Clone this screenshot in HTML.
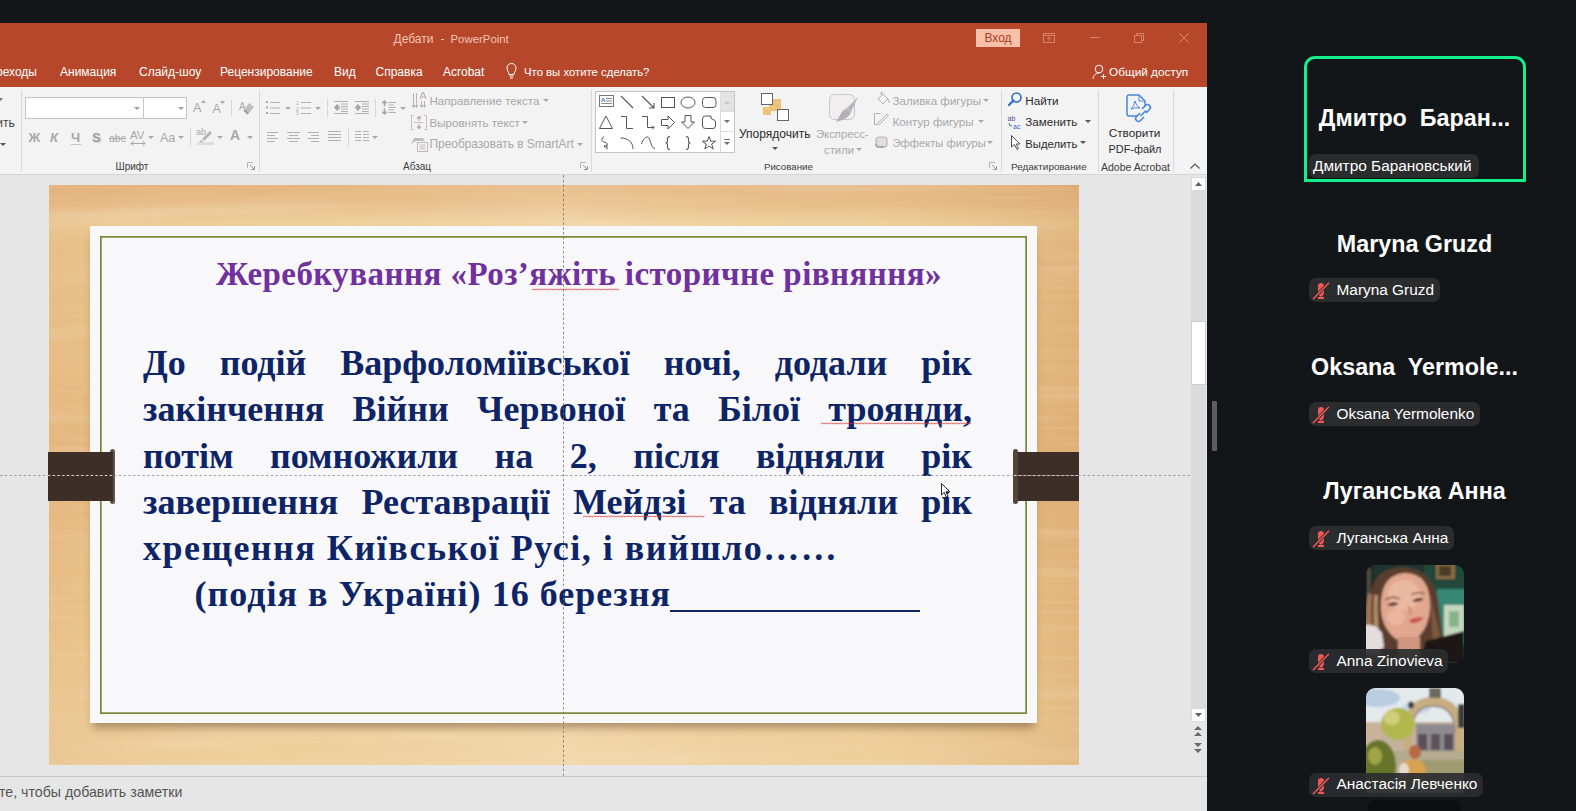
<!DOCTYPE html>
<html><head><meta charset="utf-8">
<style>
*{margin:0;padding:0;box-sizing:border-box}
html,body{width:1576px;height:811px;overflow:hidden;background:#131619;font-family:"Liberation Sans",sans-serif;position:relative}
svg{overflow:visible}
.line{position:absolute;left:94px;width:829px;display:flex;justify-content:space-between;font-family:"Liberation Serif",serif;font-weight:bold;font-size:36px;line-height:41px;color:#0d2466;white-space:nowrap}
.sl{position:absolute;font-family:"Liberation Serif",serif;font-weight:bold;white-space:nowrap;color:#0d2466}
</style></head><body>
<div style="position:absolute;left:0px;top:23px;width:1207px;height:788px;background:#e6e6e6;"></div>
<div style="position:absolute;left:0px;top:23px;width:1207px;height:64px;background:#b7472a;"></div>
<div style="position:absolute;top:30.9px;font-size:12.00px;line-height:17px;color:#f3c6b3;white-space:nowrap;left:393.5px;">Дебати</div>
<div style="position:absolute;left:440.5px;top:39px;width:3.5px;height:1px;background:#f3c6b3;"></div>
<div style="position:absolute;top:31.4px;font-size:11.40px;line-height:16px;color:#f3c6b3;white-space:nowrap;left:450.5px;">PowerPoint</div>
<div style="position:absolute;left:976px;top:29px;width:44px;height:18px;background:#f8bfa9;color:#a63f26;font-size:12px;line-height:18px;text-align:center">Вход</div>
<svg style="position:absolute;left:1043px;top:33px;" width="12" height="10" viewBox="0 0 12 10"><rect x="0.5" y="0.5" width="11" height="9" fill="none" stroke="#d9836b"/><path d="M0.5 2.5H11.5M6 8V4M4 6L6 4L8 6" fill="none" stroke="#d9836b"/></svg>
<div style="position:absolute;left:1090px;top:37px;width:10px;height:1px;background:#d9836b;"></div>
<svg style="position:absolute;left:1134px;top:33px;" width="10" height="10" viewBox="0 0 10 10"><path d="M2.5 2.5V0.5H9.5V7.5H7.5M0.5 2.5H7.5V9.5H0.5Z" fill="none" stroke="#d9836b"/></svg>
<svg style="position:absolute;left:1179px;top:33px;" width="10" height="10" viewBox="0 0 10 10"><path d="M0 0L10 10M10 0L0 10" stroke="#d9836b" stroke-width="1"/></svg>
<div style="position:absolute;top:63.9px;font-size:12.00px;line-height:17px;color:#ffffff;white-space:nowrap;left:-4.0px;">реходы</div>
<div style="position:absolute;top:63.9px;font-size:12.00px;line-height:17px;color:#ffffff;white-space:nowrap;left:60.0px;">Анимация</div>
<div style="position:absolute;top:63.9px;font-size:12.00px;line-height:17px;color:#ffffff;white-space:nowrap;left:139.0px;">Слайд-шоу</div>
<div style="position:absolute;top:63.9px;font-size:12.00px;line-height:17px;color:#ffffff;white-space:nowrap;left:220.0px;">Рецензирование</div>
<div style="position:absolute;top:63.9px;font-size:12.00px;line-height:17px;color:#ffffff;white-space:nowrap;left:334.0px;">Вид</div>
<div style="position:absolute;top:63.9px;font-size:12.00px;line-height:17px;color:#ffffff;white-space:nowrap;left:375.5px;">Справка</div>
<div style="position:absolute;top:63.9px;font-size:12.00px;line-height:17px;color:#ffffff;white-space:nowrap;left:443.0px;">Acrobat</div>
<div style="position:absolute;top:64.4px;font-size:11.35px;line-height:16px;color:#ffffff;white-space:nowrap;left:524.0px;">Что вы хотите сделать?</div>
<svg style="position:absolute;left:506px;top:63px;" width="11" height="16" viewBox="0 0 11 16"><path d="M3 11.5C3 9 1 8 1 5A4.5 4.5 0 0 1 10 5C10 8 8 9 8 11.5Z" fill="none" stroke="#fff" stroke-width="1"/><path d="M3.5 13H7.5M4 15H7" stroke="#fff"/></svg>
<div style="position:absolute;top:63.9px;font-size:11.80px;line-height:17px;color:#ffffff;white-space:nowrap;left:1109.0px;">Общий доступ</div>
<svg style="position:absolute;left:1092px;top:64px;" width="14" height="16" viewBox="0 0 14 16"><circle cx="7" cy="5" r="3.8" fill="none" stroke="#fff"/><path d="M1 15C1.5 11 4 9 7 9" fill="none" stroke="#fff"/><path d="M9 12.5H14M11.5 10V15" stroke="#fff"/></svg>
<div style="position:absolute;left:0px;top:87px;width:1207px;height:88px;background:#f3f3f3;border-bottom:1px solid #d5d5d5"></div>
<div style="position:absolute;left:21px;top:90px;width:1px;height:82px;background:#dadada;"></div>
<div style="position:absolute;left:259px;top:90px;width:1px;height:82px;background:#dadada;"></div>
<div style="position:absolute;left:591px;top:90px;width:1px;height:82px;background:#dadada;"></div>
<div style="position:absolute;left:1001px;top:90px;width:1px;height:82px;background:#dadada;"></div>
<div style="position:absolute;left:1098px;top:90px;width:1px;height:82px;background:#dadada;"></div>
<div style="position:absolute;left:1173px;top:90px;width:1px;height:82px;background:#dadada;"></div>
<div style="position:absolute;top:114.7px;font-size:12.00px;line-height:17px;color:#444;white-space:nowrap;left:-3.7px;">ить</div>
<svg style="position:absolute;left:0.0px;top:142.5px;" width="6" height="3" viewBox="0 0 6 3"><path d="M0 0H6 L3.0 3Z" fill="#555"/></svg>
<svg style="position:absolute;left:-2.5px;top:98.0px;" width="5" height="3" viewBox="0 0 5 3"><path d="M0 0H5 L2.5 3Z" fill="#777"/></svg>
<div style="position:absolute;left:25px;top:97px;width:162px;height:22px;background:#fff;border:1px solid #c6c6c6"></div>
<div style="position:absolute;left:143px;top:98px;width:1px;height:20px;background:#c6c6c6;"></div>
<svg style="position:absolute;left:134.0px;top:107.0px;" width="6" height="3" viewBox="0 0 6 3"><path d="M0 0H6 L3.0 3Z" fill="#9d9d9d"/></svg>
<svg style="position:absolute;left:178.0px;top:107.0px;" width="6" height="3" viewBox="0 0 6 3"><path d="M0 0H6 L3.0 3Z" fill="#9d9d9d"/></svg>
<div style="position:absolute;top:99.2px;font-size:12.50px;line-height:18px;color:#a8a8a8;white-space:nowrap;left:193.0px;">A</div>
<svg style="position:absolute;left:200.5px;top:100px;" width="4" height="3" viewBox="0 0 4 3"><path d="M0 3L2.5 0L5 3Z" fill="#a8a8a8"/></svg>
<div style="position:absolute;top:100.2px;font-size:12.50px;line-height:18px;color:#a8a8a8;white-space:nowrap;left:212.5px;">A</div>
<svg style="position:absolute;left:219.5px;top:100.5px;" width="4.5" height="2.5" viewBox="0 0 4.5 2.5"><path d="M0 0H5L2.5 3Z" fill="#a8a8a8"/></svg>
<div style="position:absolute;left:231px;top:100px;width:1px;height:16px;background:#d6d6d6;"></div>
<div style="position:absolute;top:99.7px;font-size:10.00px;line-height:14px;color:#a8a8a8;white-space:nowrap;left:239.0px;">A</div>
<svg style="position:absolute;left:243px;top:103px;" width="11" height="11" viewBox="0 0 11 11"><path d="M6 0L11 4L5 11L1 7Z" fill="#bdbdbd"/><path d="M1 7L5 11" stroke="#a0a0a0" stroke-width="2"/></svg>
<div style="position:absolute;top:128.7px;font-size:13.00px;line-height:18px;color:#a8a8a8;white-space:nowrap;font-weight:bold;left:28.5px;">Ж</div>
<div style="position:absolute;top:128.7px;font-size:13.00px;line-height:18px;color:#a8a8a8;white-space:nowrap;font-weight:bold;left:50.0px;font-style:italic">К</div>
<div style="position:absolute;top:128.7px;font-size:13.00px;line-height:18px;color:#a8a8a8;white-space:nowrap;font-weight:bold;left:71.0px;">Ч</div>
<div style="position:absolute;left:71px;top:143.5px;width:10px;height:1px;background:#c4c4c4;"></div>
<div style="position:absolute;top:128.7px;font-size:13.00px;line-height:18px;color:#a0a0a0;white-space:nowrap;font-weight:bold;left:92.0px;text-shadow:1px 1px 1px #cfcfcf">S</div>
<div style="position:absolute;top:131.2px;font-size:10.50px;line-height:15px;color:#a8a8a8;white-space:nowrap;left:109.0px;text-decoration:line-through">abc</div>
<div style="position:absolute;top:126.7px;font-size:11.50px;line-height:16px;color:#a8a8a8;white-space:nowrap;left:130.0px;">AV</div>
<svg style="position:absolute;left:131px;top:140.5px;" width="14" height="5" viewBox="0 0 14 5"><path d="M0 2.5H14M2.5 0L0 2.5L2.5 5M11.5 0L14 2.5L11.5 5" fill="none" stroke="#a8a8a8" stroke-width="1"/></svg>
<svg style="position:absolute;left:148.0px;top:136.0px;" width="6" height="3" viewBox="0 0 6 3"><path d="M0 0H6 L3.0 3Z" fill="#a8a8a8"/></svg>
<div style="position:absolute;top:128.7px;font-size:12.50px;line-height:18px;color:#a8a8a8;white-space:nowrap;left:160.0px;">Aa</div>
<svg style="position:absolute;left:178.0px;top:136.0px;" width="6" height="3" viewBox="0 0 6 3"><path d="M0 0H6 L3.0 3Z" fill="#a8a8a8"/></svg>
<div style="position:absolute;left:190px;top:129px;width:1px;height:18px;background:#d6d6d6;"></div>
<div style="position:absolute;top:126.2px;font-size:9.00px;line-height:13px;color:#a8a8a8;white-space:nowrap;left:196.0px;">ab</div>
<svg style="position:absolute;left:198px;top:129px;" width="17" height="14" viewBox="0 0 17 14"><path d="M4 10L12 2L14 4L6 12Z" fill="#b3b3b3"/><path d="M3 11L5 13L1.5 13.5Z" fill="#a5a5a5"/></svg>
<div style="position:absolute;left:197px;top:141.5px;width:17px;height:3px;background:#e3dcdf;"></div>
<svg style="position:absolute;left:217.0px;top:136.0px;" width="6" height="3" viewBox="0 0 6 3"><path d="M0 0H6 L3.0 3Z" fill="#a8a8a8"/></svg>
<div style="position:absolute;top:124.7px;font-size:14.00px;line-height:20px;color:#a8a8a8;white-space:nowrap;font-weight:bold;left:230.0px;">A</div>
<svg style="position:absolute;left:247.0px;top:136.0px;" width="6" height="3" viewBox="0 0 6 3"><path d="M0 0H6 L3.0 3Z" fill="#a8a8a8"/></svg>
<div style="position:absolute;top:160.4px;font-size:10.00px;line-height:14px;color:#3c3c3c;white-space:nowrap;left:115.5px;">Шрифт</div>
<svg style="position:absolute;left:247px;top:162px;" width="8" height="8" viewBox="0 0 8 8"><path d="M0.5 6V0.5H6" fill="none" stroke="#b5b5b5"/><path d="M3 3L7.5 7.5M7.5 4V7.5H4" fill="none" stroke="#9a9a9a"/></svg>
<svg style="position:absolute;left:266px;top:101px;" width="15" height="14" viewBox="0 0 15 14"><rect x="0" y="0" width="2" height="2" fill="#a8a8a8"/><rect x="0" y="5.5" width="2" height="2" fill="#a8a8a8"/><rect x="0" y="11" width="2" height="2" fill="#a8a8a8"/><path d="M4 1.5H14M4 7H14M4 12.5H14" stroke="#b0b0b0"/></svg>
<svg style="position:absolute;left:285.0px;top:106.5px;" width="6" height="3" viewBox="0 0 6 3"><path d="M0 0H6 L3.0 3Z" fill="#a8a8a8"/></svg>
<svg style="position:absolute;left:296px;top:101px;" width="16" height="14" viewBox="0 0 16 14"><text x="0" y="4" font-size="5" fill="#a8a8a8" font-family="Liberation Sans">1</text><text x="0" y="9.5" font-size="5" fill="#a8a8a8" font-family="Liberation Sans">2</text><text x="0" y="14" font-size="5" fill="#a8a8a8" font-family="Liberation Sans">3</text><path d="M5 1.5H15M5 7H15M5 12.5H15" stroke="#b0b0b0"/></svg>
<svg style="position:absolute;left:315.0px;top:106.5px;" width="6" height="3" viewBox="0 0 6 3"><path d="M0 0H6 L3.0 3Z" fill="#a8a8a8"/></svg>
<div style="position:absolute;left:327px;top:99px;width:1px;height:18px;background:#d6d6d6;"></div>
<svg style="position:absolute;left:334px;top:101px;" width="15" height="13" viewBox="0 0 15 13"><path d="M0 0.5H14M7 3H14M7 5.5H14M7 8H14M7 10.5H14M0 12.5H14" stroke="#b0b0b0"/><path d="M6 6.5H2M4 3.8L1.3 6.5L4 9.2" fill="none" stroke="#a2a2a2" stroke-width="2"/></svg>
<svg style="position:absolute;left:355px;top:101px;" width="15" height="13" viewBox="0 0 15 13"><path d="M0 0.5H14M7 3H14M7 5.5H14M7 8H14M7 10.5H14M0 12.5H14" stroke="#b0b0b0"/><path d="M0 6.5H4M2 3.8L4.7 6.5L2 9.2" fill="none" stroke="#a2a2a2" stroke-width="2"/></svg>
<div style="position:absolute;left:375px;top:99px;width:1px;height:18px;background:#d6d6d6;"></div>
<svg style="position:absolute;left:382px;top:100px;" width="15" height="15" viewBox="0 0 15 15"><path d="M2.5 1V6.5M0.3 3.3L2.5 1L4.7 3.3M2.5 8.5V14M0.3 11.7L2.5 14L4.7 11.7" fill="none" stroke="#a5a5a5" stroke-width="1.5"/><path d="M6.5 2.5H14M6.5 5H12M6.5 7.5H14M6.5 10H12M6.5 12.5H14" stroke="#b0b0b0"/></svg>
<svg style="position:absolute;left:400.0px;top:106.5px;" width="6" height="3" viewBox="0 0 6 3"><path d="M0 0H6 L3.0 3Z" fill="#a8a8a8"/></svg>
<svg style="position:absolute;left:267px;top:132px;" width="12" height="10" viewBox="0 0 12 10"><path d="M0 0.5H11M0 3.5H8M0 6.5H11M0 9.5H8" stroke="#b0b0b0"/></svg>
<svg style="position:absolute;left:287px;top:132px;" width="13" height="10" viewBox="0 0 13 10"><path d="M0 0.5H13M2 3.5H11M0 6.5H13M2 9.5H11" stroke="#b0b0b0"/></svg>
<svg style="position:absolute;left:308px;top:132px;" width="12" height="10" viewBox="0 0 12 10"><path d="M0 0.5H11M3 3.5H11M0 6.5H11M3 9.5H11" stroke="#b0b0b0"/></svg>
<svg style="position:absolute;left:328px;top:131px;" width="13" height="12" viewBox="0 0 13 12"><path d="M0 0.5H13M0 3.5H13M0 6.5H13M0 9.5H13" stroke="#b0b0b0"/></svg>
<div style="position:absolute;left:348px;top:129px;width:1px;height:18px;background:#d6d6d6;"></div>
<svg style="position:absolute;left:355px;top:131px;" width="14" height="12" viewBox="0 0 14 12"><path d="M0 0.5H6M8 0.5H14M0 3.5H6M8 3.5H14M0 6.5H6M8 6.5H14M0 9.5H6M8 9.5H14" stroke="#b0b0b0"/></svg>
<svg style="position:absolute;left:372.0px;top:136.0px;" width="6" height="3" viewBox="0 0 6 3"><path d="M0 0H6 L3.0 3Z" fill="#a8a8a8"/></svg>
<svg style="position:absolute;left:412px;top:92px;" width="15" height="17" viewBox="0 0 15 17"><path d="M1.5 1V15M4.5 1V15M0 13L1.5 15.5L3 13M3 13L4.5 15.5L6 13M9.5 9V15M12.5 9V15M8 13L9.5 15.5L11 13M11 13L12.5 15.5L14 13" fill="none" stroke="#b8b3b6"/><path d="M8 7L10.5 0.5H11.5L14 7M9 5H13" fill="none" stroke="#b3aeb1" stroke-width="1.1"/></svg>
<div style="position:absolute;top:93.2px;font-size:11.60px;line-height:16px;color:#a8a8a8;white-space:nowrap;left:429.5px;">Направление текста</div>
<svg style="position:absolute;left:543.0px;top:98.5px;" width="6" height="3" viewBox="0 0 6 3"><path d="M0 0H6 L3.0 3Z" fill="#a8a8a8"/></svg>
<svg style="position:absolute;left:411px;top:115px;" width="16" height="15" viewBox="0 0 16 15"><path d="M3 0.5H0.5V14.5H3M13 0.5H15.5V14.5H13" fill="none" stroke="#c4bfc2"/><path d="M3 7.5H13" stroke="#c8c3c6"/><path d="M8 1.5V6M6 3.5L8 1.5L10 3.5M8 9V13.5M6 11.5L8 13.5L10 11.5" fill="none" stroke="#aaa5a8" stroke-width="1.1"/></svg>
<div style="position:absolute;top:114.7px;font-size:11.60px;line-height:16px;color:#a8a8a8;white-space:nowrap;left:429.5px;">Выровнять текст</div>
<svg style="position:absolute;left:522.0px;top:120.5px;" width="6" height="3" viewBox="0 0 6 3"><path d="M0 0H6 L3.0 3Z" fill="#a8a8a8"/></svg>
<svg style="position:absolute;left:411px;top:137px;" width="17" height="15" viewBox="0 0 17 15"><path d="M0 7L3 1H12L14 4H5Z" fill="#c2bdc0"/><rect x="6.5" y="5.5" width="10" height="9" fill="#f7f5f6" stroke="#bdb8bb"/><path d="M8.5 8H14.5M8.5 10H14.5M8.5 12H14.5" stroke="#c4bfc2"/></svg>
<div style="position:absolute;top:136.2px;font-size:11.90px;line-height:17px;color:#a8a8a8;white-space:nowrap;left:429.5px;">Преобразовать в SmartArt</div>
<svg style="position:absolute;left:577.0px;top:142.5px;" width="6" height="3" viewBox="0 0 6 3"><path d="M0 0H6 L3.0 3Z" fill="#a8a8a8"/></svg>
<div style="position:absolute;top:160.4px;font-size:10.00px;line-height:14px;color:#3c3c3c;white-space:nowrap;left:403.0px;">Абзац</div>
<svg style="position:absolute;left:580px;top:162px;" width="8" height="8" viewBox="0 0 8 8"><path d="M0.5 6V0.5H6" fill="none" stroke="#b5b5b5"/><path d="M3 3L7.5 7.5M7.5 4V7.5H4" fill="none" stroke="#9a9a9a"/></svg>
<div style="position:absolute;left:595px;top:91px;width:140px;height:62px;background:#fff;border:1px solid #c6c6c6"></div>
<div style="position:absolute;left:720px;top:92px;width:14px;height:20px;background:#e3e3e3;"></div>
<div style="position:absolute;left:720px;top:92px;width:1px;height:60px;background:#dcdcdc;"></div>
<div style="position:absolute;left:720px;top:131px;width:14px;height:1px;background:#dcdcdc;"></div>
<div style="position:absolute;left:720px;top:111px;width:14px;height:1px;background:#dcdcdc;"></div>
<svg style="position:absolute;left:724px;top:101px;" width="6" height="3" viewBox="0 0 6 3"><path d="M0 3L3 0L6 3Z" fill="#c8c8c8"/></svg>
<svg style="position:absolute;left:724px;top:120px;" width="6" height="3" viewBox="0 0 6 3"><path d="M0 0H6L3 3Z" fill="#707070"/></svg>
<svg style="position:absolute;left:724px;top:139px;" width="6" height="6" viewBox="0 0 6 6"><path d="M0 0.5H6" stroke="#707070"/><path d="M0 3H6L3 6Z" fill="#707070"/></svg>
<svg style="position:absolute;left:599px;top:94.5px;" width="14" height="14" viewBox="0 0 14 14"><rect x="0.5" y="0.5" width="14" height="11" fill="#fff" stroke="#777"/><text x="2" y="7" font-size="6" font-weight="bold" fill="#3a6fc4" font-family="Liberation Sans">A</text><path d="M7 3.5H13M7 6H13M2 8.5H13" stroke="#888"/></svg>
<svg style="position:absolute;left:620px;top:94.5px;" width="14" height="14" viewBox="0 0 14 14"><path d="M1 1L13 13" stroke="#555" stroke-width="1.1"/></svg>
<svg style="position:absolute;left:641px;top:94.5px;" width="14" height="14" viewBox="0 0 14 14"><path d="M1 1L13 13M13 8V13H8" fill="none" stroke="#555" stroke-width="1.1"/></svg>
<svg style="position:absolute;left:661px;top:94.5px;" width="14" height="14" viewBox="0 0 14 14"><rect x="0.5" y="2.5" width="13" height="10" fill="none" stroke="#555"/></svg>
<svg style="position:absolute;left:681px;top:94.5px;" width="14" height="14" viewBox="0 0 14 14"><ellipse cx="7" cy="7.5" rx="7" ry="5.5" fill="none" stroke="#555"/></svg>
<svg style="position:absolute;left:702px;top:94.5px;" width="14" height="14" viewBox="0 0 14 14"><rect x="0.5" y="2.5" width="13.5" height="10" rx="3" fill="none" stroke="#555"/></svg>
<svg style="position:absolute;left:599px;top:115px;" width="14" height="14" viewBox="0 0 14 14"><path d="M7 1L13.5 13.5H0.5Z" fill="none" stroke="#555"/></svg>
<svg style="position:absolute;left:620px;top:115px;" width="14" height="14" viewBox="0 0 14 14"><path d="M1 1.5H6.5V13.5H13" fill="none" stroke="#555"/></svg>
<svg style="position:absolute;left:641px;top:115px;" width="14" height="14" viewBox="0 0 14 14"><path d="M1 1.5H6.5V12.5H13M11 10.5L13 12.5L11 14.5" fill="none" stroke="#555"/></svg>
<svg style="position:absolute;left:661px;top:115px;" width="14" height="14" viewBox="0 0 14 14"><path d="M0.5 4.5H7V1L13.5 7.5L7 14V10.5H0.5Z" fill="none" stroke="#555"/></svg>
<svg style="position:absolute;left:681px;top:115px;" width="14" height="14" viewBox="0 0 14 14"><path d="M4 0.5H10V7H13.5L7 13.5L0.5 7H4Z" fill="none" stroke="#555"/></svg>
<svg style="position:absolute;left:702px;top:115px;" width="14" height="14" viewBox="0 0 14 14"><path d="M0.5 4Q0.5 1 3.5 1H9Q8 4 11 4.5Q13.5 5 13.5 7V11Q13.5 13.5 11 13.5H3.5Q0.5 13.5 0.5 11Z" fill="none" stroke="#555"/></svg>
<svg style="position:absolute;left:599px;top:135.5px;" width="14" height="14" viewBox="0 0 14 14"><path d="M5 0.5Q2 2 3 4.5Q4 6.5 7 6.5Q9 7.5 8 10Q7 12 5.5 11Q4.5 9.5 6.5 9Q8.5 9.5 8 13.5" fill="none" stroke="#555"/></svg>
<svg style="position:absolute;left:620px;top:135.5px;" width="14" height="14" viewBox="0 0 14 14"><path d="M0.5 2C8 2 13 6 13 13" fill="none" stroke="#555"/></svg>
<svg style="position:absolute;left:641px;top:135.5px;" width="14" height="14" viewBox="0 0 14 14"><path d="M0.5 8C2 3 4.5 1 6.5 1C9.5 1 9.5 12.5 14 12.5" fill="none" stroke="#555"/></svg>
<svg style="position:absolute;left:661px;top:135.5px;" width="14" height="14" viewBox="0 0 14 14"><path d="M9 0.5Q6.5 0.5 6.5 3V5Q6.5 7 4.5 7Q6.5 7 6.5 9V11Q6.5 13.5 9 13.5" fill="none" stroke="#555" stroke-width="1.1"/></svg>
<svg style="position:absolute;left:681px;top:135.5px;" width="14" height="14" viewBox="0 0 14 14"><path d="M5 0.5Q7.5 0.5 7.5 3V5Q7.5 7 9.5 7Q7.5 7 7.5 9V11Q7.5 13.5 5 13.5" fill="none" stroke="#555" stroke-width="1.1"/></svg>
<svg style="position:absolute;left:702px;top:135.5px;" width="14" height="14" viewBox="0 0 14 14"><path d="M7 0.5L8.8 5.2H13.6L9.7 8.1L11.2 13L7 10L2.8 13L4.3 8.1L0.4 5.2H5.2Z" fill="none" stroke="#555"/></svg>
<svg style="position:absolute;left:761px;top:93px;" width="28" height="29" viewBox="0 0 28 29"><rect x="8" y="6" width="12" height="12" fill="#ecc479"/><rect x="0.5" y="0.5" width="11" height="11" fill="#fff" stroke="#666"/><rect x="2" y="14" width="8" height="8" fill="#ecc479"/><rect x="16.5" y="16.5" width="11" height="11" fill="#fff" stroke="#666"/></svg>
<div style="position:absolute;top:125.7px;font-size:12.00px;line-height:17px;color:#2b2b2b;white-space:nowrap;left:739.0px;">Упорядочить</div>
<svg style="position:absolute;left:772.0px;top:147.0px;" width="6" height="3" viewBox="0 0 6 3"><path d="M0 0H6 L3.0 3Z" fill="#555"/></svg>
<svg style="position:absolute;left:829px;top:94px;" width="30" height="29" viewBox="0 0 30 29"><rect x="0.5" y="0.5" width="25" height="25" rx="5" fill="#f1eef0" stroke="#c8c6c8"/><path d="M29 3L22 18L17 15Z" fill="#b9b6b9"/><path d="M17 15C13 16 12 20 7 28C14 26 20 24 22 18Z" fill="#b2b0b2"/></svg>
<div style="position:absolute;top:125.7px;font-size:11.30px;line-height:16px;color:#a8a8a8;white-space:nowrap;left:816.0px;">Экспресс-</div>
<div style="position:absolute;top:142.2px;font-size:11.30px;line-height:16px;color:#a8a8a8;white-space:nowrap;left:824.0px;">стили</div>
<svg style="position:absolute;left:856.0px;top:148.0px;" width="6" height="3" viewBox="0 0 6 3"><path d="M0 0H6 L3.0 3Z" fill="#a8a8a8"/></svg>
<svg style="position:absolute;left:877px;top:92px;" width="13" height="13" viewBox="0 0 13 13"><path d="M1 7L6 2L11 7L6 12Z" fill="none" stroke="#b0b0b0"/><path d="M4 3V0.5H6" fill="none" stroke="#b0b0b0"/><path d="M11 7Q13 9 12 11" fill="none" stroke="#b0b0b0"/></svg>
<div style="position:absolute;top:93.2px;font-size:11.60px;line-height:16px;color:#a8a8a8;white-space:nowrap;left:892.5px;">Заливка фигуры</div>
<svg style="position:absolute;left:983.0px;top:98.5px;" width="6" height="3" viewBox="0 0 6 3"><path d="M0 0H6 L3.0 3Z" fill="#a8a8a8"/></svg>
<svg style="position:absolute;left:874px;top:113px;" width="15" height="12" viewBox="0 0 15 12"><path d="M0.5 1V11.5H4" fill="none" stroke="#b0b0b0"/><path d="M0.5 0.5H6" stroke="#b0b0b0"/><path d="M4 10L13 1L14.5 2.5L5.5 11.5Z" fill="none" stroke="#b0b0b0"/></svg>
<div style="position:absolute;top:114.3px;font-size:11.60px;line-height:16px;color:#a8a8a8;white-space:nowrap;left:892.5px;">Контур фигуры</div>
<svg style="position:absolute;left:978.0px;top:120.0px;" width="6" height="3" viewBox="0 0 6 3"><path d="M0 0H6 L3.0 3Z" fill="#a8a8a8"/></svg>
<svg style="position:absolute;left:875px;top:136px;" width="13" height="12" viewBox="0 0 13 12"><rect x="1" y="1" width="11" height="10" rx="3" fill="#e0dde0" stroke="#b8b6b8" stroke-width="1.2"/><path d="M1 8Q1 11 4 11H9" fill="none" stroke="#aaa" stroke-width="2"/></svg>
<div style="position:absolute;top:135.3px;font-size:11.20px;line-height:16px;color:#a8a8a8;white-space:nowrap;left:892.5px;">Эффекты фигуры</div>
<svg style="position:absolute;left:987.0px;top:141.0px;" width="6" height="3" viewBox="0 0 6 3"><path d="M0 0H6 L3.0 3Z" fill="#a8a8a8"/></svg>
<div style="position:absolute;top:160.4px;font-size:9.70px;line-height:14px;color:#3c3c3c;white-space:nowrap;left:764.0px;">Рисование</div>
<svg style="position:absolute;left:989px;top:162px;" width="8" height="8" viewBox="0 0 8 8"><path d="M0.5 6V0.5H6" fill="none" stroke="#b5b5b5"/><path d="M3 3L7.5 7.5M7.5 4V7.5H4" fill="none" stroke="#9a9a9a"/></svg>
<svg style="position:absolute;left:1008px;top:92px;" width="14" height="15" viewBox="0 0 14 15"><circle cx="8.5" cy="5.5" r="4.5" fill="none" stroke="#2e6cc2" stroke-width="1.6"/><path d="M5.5 8.5L1 13" stroke="#2e6cc2" stroke-width="2.2" stroke-linecap="round"/></svg>
<div style="position:absolute;top:93.2px;font-size:11.70px;line-height:16px;color:#2b2b2b;white-space:nowrap;left:1025.3px;">Найти</div>
<svg style="position:absolute;left:1007px;top:115px;" width="17" height="14" viewBox="0 0 17 14"><text x="0.5" y="6" font-size="7" fill="#5a4a8a" font-family="Liberation Sans">ab</text><text x="6" y="13.5" font-size="7" fill="#2e6cc2" font-family="Liberation Sans">ac</text><path d="M2 8Q2 11 5 11" fill="none" stroke="#2e6cc2"/></svg>
<div style="position:absolute;top:114.2px;font-size:11.60px;line-height:16px;color:#2b2b2b;white-space:nowrap;left:1025.3px;">Заменить</div>
<svg style="position:absolute;left:1085.0px;top:120.0px;" width="6" height="3" viewBox="0 0 6 3"><path d="M0 0H6 L3.0 3Z" fill="#555"/></svg>
<svg style="position:absolute;left:1011px;top:135px;" width="10" height="15" viewBox="0 0 10 15"><path d="M0.5 0.5V12L3.5 9.5L6 14.5L7.5 13.8L5.2 9H9Z" fill="#fff" stroke="#555"/></svg>
<div style="position:absolute;top:135.7px;font-size:11.30px;line-height:16px;color:#2b2b2b;white-space:nowrap;left:1025.3px;">Выделить</div>
<svg style="position:absolute;left:1080.0px;top:141.0px;" width="6" height="3" viewBox="0 0 6 3"><path d="M0 0H6 L3.0 3Z" fill="#555"/></svg>
<div style="position:absolute;top:160.4px;font-size:9.95px;line-height:14px;color:#3c3c3c;white-space:nowrap;left:1011.0px;">Редактирование</div>
<svg style="position:absolute;left:1126px;top:94px;" width="27" height="31" viewBox="0 0 27 31"><path d="M11 22H3Q1 22 1 20V3Q1 1 3 1H13L19 7V12" fill="none" stroke="#4a87d9" stroke-width="1.5"/><path d="M13 1V7H19" fill="none" stroke="#4a87d9" stroke-width="1"/><path d="M5 15Q8 12 9 7Q10 12 14 14Q9 13 5 15Z" fill="none" stroke="#4a87d9" stroke-width="1"/><path d="M16 15L19.5 11.5A2.8 2.8 0 0 1 23.5 15.5L20 19M18 23L14.5 26.5A2.8 2.8 0 0 1 10.5 22.5L14 19M14.5 22L20 16.5" fill="none" stroke="#4a87d9" stroke-width="1.6"/></svg>
<div style="position:absolute;top:124.7px;font-size:11.80px;line-height:17px;color:#2b2b2b;white-space:nowrap;left:1134.5px;width:0;display:flex;justify-content:center;">Створити</div>
<div style="position:absolute;top:141.7px;font-size:10.90px;line-height:15px;color:#2b2b2b;white-space:nowrap;left:1135.0px;width:0;display:flex;justify-content:center;">PDF-файл</div>
<div style="position:absolute;top:159.9px;font-size:10.50px;line-height:15px;color:#3c3c3c;white-space:nowrap;left:1101.0px;">Adobe Acrobat</div>
<svg style="position:absolute;left:1190px;top:163px;" width="10" height="6" viewBox="0 0 10 6"><path d="M0.5 5.5L5 1L9.5 5.5" fill="none" stroke="#555" stroke-width="1.2"/></svg>
<div style="position:absolute;left:1191px;top:177px;width:15px;height:531px;background:#dcdbdc;"></div>
<div style="position:absolute;left:1191px;top:177px;width:15px;height:14px;background:#fff;border:1px solid #d9d9d9"></div>
<svg style="position:absolute;left:1195px;top:182px;" width="7" height="4" viewBox="0 0 7 4"><path d="M0 4L3.5 0L7 4Z" fill="#606060"/></svg>
<div style="position:absolute;left:1191px;top:321px;width:15px;height:64px;background:#fff;border:1px solid #cfcfcf"></div>
<div style="position:absolute;left:1191px;top:708px;width:15px;height:14px;background:#fff;border:1px solid #d9d9d9"></div>
<svg style="position:absolute;left:1195px;top:713px;" width="7" height="4" viewBox="0 0 7 4"><path d="M0 0H7L3.5 4Z" fill="#606060"/></svg>
<svg style="position:absolute;left:1194px;top:726px;" width="8" height="11" viewBox="0 0 8 11"><path d="M0 4L4 0L8 4ZM0 10L4 6L8 10Z" fill="#6a6a6a"/></svg>
<svg style="position:absolute;left:1194px;top:743px;" width="8" height="11" viewBox="0 0 8 11"><path d="M0 0H8L4 4ZM0 6H8L4 10Z" fill="#6a6a6a"/></svg>
<div style="position:absolute;left:0px;top:776px;width:1207px;height:35px;background:#e6e6e6;border-top:1px solid #c9c9c9"></div>
<div style="position:absolute;top:782.4px;font-size:14.20px;line-height:20px;color:#555;white-space:nowrap;left:-1.0px;">те, чтобы добавить заметки</div>
<div style="position:absolute;left:49px;top:185px;width:1030px;height:580px;overflow:hidden;background:#eac58c">
<svg style="position:absolute;left:0;top:0" width="1030" height="580" viewBox="0 0 1030 580">
<defs>
<linearGradient id="wg" x1="0" y1="0" x2="0" y2="1">
<stop offset="0" stop-color="#e5b681"/><stop offset=".035" stop-color="#e8bf8b"/><stop offset=".065" stop-color="#eed39f"/><stop offset=".1" stop-color="#ebc790"/>
<stop offset=".3" stop-color="#eac48b"/><stop offset=".5" stop-color="#e7bb83"/><stop offset=".62" stop-color="#eac38a"/><stop offset=".8" stop-color="#edcc93"/><stop offset="1" stop-color="#efd4a2"/>
</linearGradient>
<filter id="grain" x="0" y="0" width="100%" height="100%">
<feTurbulence type="fractalNoise" baseFrequency="0.006 0.2" numOctaves="3" seed="7" result="n"/>
<feColorMatrix in="n" type="matrix" values="0 0 0 0 0.85  0 0 0 0 0.6  0 0 0 0 0.4  0 0 0 -2.2 1.25"/>
</filter>
<filter id="grain2" x="0" y="0" width="100%" height="100%">
<feTurbulence type="fractalNoise" baseFrequency="0.003 0.05" numOctaves="2" seed="3" result="n"/>
<feColorMatrix in="n" type="matrix" values="0 0 0 0 1  0 0 0 0 0.95  0 0 0 0 0.85  0 0 0 2.5 -1.3"/>
</filter>
</defs>
<rect width="1030" height="580" fill="url(#wg)"/>
<linearGradient id="wh" x1="0" y1="0" x2="1" y2="0"><stop offset="0" stop-color="#d9a068" stop-opacity=".22"/><stop offset=".2" stop-color="#e0b070" stop-opacity=".08"/><stop offset=".5" stop-color="#fff0d8" stop-opacity=".18"/><stop offset=".8" stop-color="#e0b070" stop-opacity=".08"/><stop offset=".93" stop-color="#d49a60" stop-opacity=".25"/><stop offset="1" stop-color="#cf935a" stop-opacity=".38"/></linearGradient>
<rect width="1030" height="580" fill="url(#wh)"/>
<rect width="1030" height="580" filter="url(#grain)" opacity=".28"/>
<rect width="1030" height="580" filter="url(#grain2)" opacity=".2"/>
</svg>
<div style="position:absolute;left:41px;top:41px;width:947px;height:497px;background:#f8f8fa;box-shadow:0 8px 8px -3px rgba(80,55,30,.42)"><svg style="position:absolute;left:10px;top:10px" width="927" height="478"><rect x="0.85" y="0.85" width="925.3" height="476.3" fill="none" stroke="#768a36" stroke-width="1.7"/></svg></div>
<div class="sl" style="left:167px;top:71px;width:725px;text-align:center;font-size:33px;line-height:37px;color:#7030a0;letter-spacing:.45px">Жеребкування «Роз’яжіть історичне рівняння»</div>
<div class="line" style="top:158px"><span>До</span><span>подій</span><span>Варфоломіївської</span><span>ночі,</span><span>додали</span><span>рік</span></div>
<div class="line" style="top:204px"><span>закінчення</span><span>Війни</span><span>Червоної</span><span>та</span><span>Білої</span><span>троянди,</span></div>
<div class="line" style="top:251px"><span>потім</span><span>помножили</span><span>на</span><span>2,</span><span>після</span><span>відняли</span><span>рік</span></div>
<div class="line" style="top:297px"><span>завершення</span><span>Реставрації</span><span>Мейдзі</span><span>та</span><span>відняли</span><span>рік</span></div>
<div class="sl" style="left:94px;top:343px;font-size:36px;line-height:41px;letter-spacing:1.5px">хрещення Київської Русі, і вийшло……</div>
<div class="sl" style="left:145.5px;top:389px;font-size:36px;line-height:41px;letter-spacing:1.02px">(подія в Україні) 16 березня</div>
<div style="position:absolute;left:621px;top:425px;width:250px;height:2px;background:#0d2466;"></div>
</div>
<div style="position:absolute;left:110px;top:449px;width:5px;height:55px;background:#64554a;border-radius:3px"></div>
<div style="position:absolute;left:1013px;top:449px;width:5px;height:55px;background:#54453b;border-radius:3px"></div>
<div style="position:absolute;left:48px;top:452px;width:65px;height:49px;background:#3d2f28;"></div>
<div style="position:absolute;left:1018px;top:452px;width:61px;height:49px;background:#3d2f28;"></div>
<svg style="position:absolute;left:0px;top:475px;" width="1191" height="1" viewBox="0 0 1191 1"><path d="M0 0.5H1191" stroke="#8a8a8a" stroke-width="1" stroke-dasharray="2.4 2.35" opacity=".8"/></svg>
<svg style="position:absolute;left:48px;top:475px;" width="66" height="1" viewBox="0 0 66 1"><path d="M0 0.5H66" stroke="#d8d0c8" stroke-width="1" stroke-dasharray="2.4 2.35"/></svg>
<svg style="position:absolute;left:1014px;top:475px;" width="65" height="1" viewBox="0 0 65 1"><path d="M0 0.5H65" stroke="#d8d0c8" stroke-width="1" stroke-dasharray="2.4 2.35"/></svg>
<svg style="position:absolute;left:563px;top:175px;" width="1" height="601" viewBox="0 0 1 601"><path d="M0.5 0V601" stroke="#707070" stroke-width="1" stroke-dasharray="2.4 2.35" opacity=".8"/></svg>
<svg style="position:absolute;left:941px;top:483px;" width="10" height="15" viewBox="0 0 10 15"><path d="M0.5 0.5V12L3.2 9.4L5.3 14L7 13.3L5 8.8H8.8Z" fill="#fff" stroke="#111" stroke-width="0.9"/></svg>
<svg style="position:absolute;left:0px;top:0px;" width="1" height="1" viewBox="0 0 1 1"><path d="M532 290 L533.5 289.0 L535.0 290.0 L536.5 289.0 L538.0 290.0 L539.5 289.0 L541.0 290.0 L542.5 289.0 L544.0 290.0 L545.5 289.0 L547.0 290.0 L548.5 289.0 L550.0 290.0 L551.5 289.0 L553.0 290.0 L554.5 289.0 L556.0 290.0 L557.5 289.0 L559.0 290.0 L560.5 289.0 L562.0 290.0 L563.5 289.0 L565.0 290.0 L566.5 289.0 L568.0 290.0 L569.5 289.0 L571.0 290.0 L572.5 289.0 L574.0 290.0 L575.5 289.0 L577.0 290.0 L578.5 289.0 L580.0 290.0 L581.5 289.0 L583.0 290.0 L584.5 289.0 L586.0 290.0 L587.5 289.0 L589.0 290.0 L590.5 289.0 L592.0 290.0 L593.5 289.0 L595.0 290.0 L596.5 289.0 L598.0 290.0 L599.5 289.0 L601.0 290.0 L602.5 289.0 L604.0 290.0 L605.5 289.0 L607.0 290.0 L608.5 289.0 L610.0 290.0 L611.5 289.0 L613.0 290.0 L614.5 289.0 L616.0 290.0 L617.5 289.0 L619.0 290.0" fill="none" stroke="#e03030" stroke-width=".8"/></svg>
<svg style="position:absolute;left:0px;top:0px;" width="1" height="1" viewBox="0 0 1 1"><path d="M821 424 L822.5 423.0 L824.0 424.0 L825.5 423.0 L827.0 424.0 L828.5 423.0 L830.0 424.0 L831.5 423.0 L833.0 424.0 L834.5 423.0 L836.0 424.0 L837.5 423.0 L839.0 424.0 L840.5 423.0 L842.0 424.0 L843.5 423.0 L845.0 424.0 L846.5 423.0 L848.0 424.0 L849.5 423.0 L851.0 424.0 L852.5 423.0 L854.0 424.0 L855.5 423.0 L857.0 424.0 L858.5 423.0 L860.0 424.0 L861.5 423.0 L863.0 424.0 L864.5 423.0 L866.0 424.0 L867.5 423.0 L869.0 424.0 L870.5 423.0 L872.0 424.0 L873.5 423.0 L875.0 424.0 L876.5 423.0 L878.0 424.0 L879.5 423.0 L881.0 424.0 L882.5 423.0 L884.0 424.0 L885.5 423.0 L887.0 424.0 L888.5 423.0 L890.0 424.0 L891.5 423.0 L893.0 424.0 L894.5 423.0 L896.0 424.0 L897.5 423.0 L899.0 424.0 L900.5 423.0 L902.0 424.0 L903.5 423.0 L905.0 424.0 L906.5 423.0 L908.0 424.0 L909.5 423.0 L911.0 424.0 L912.5 423.0 L914.0 424.0 L915.5 423.0 L917.0 424.0 L918.5 423.0 L920.0 424.0 L921.5 423.0 L923.0 424.0 L924.5 423.0 L926.0 424.0 L927.5 423.0 L929.0 424.0 L930.5 423.0 L932.0 424.0 L933.5 423.0 L935.0 424.0 L936.5 423.0 L938.0 424.0 L939.5 423.0 L941.0 424.0 L942.5 423.0 L944.0 424.0 L945.5 423.0 L947.0 424.0 L948.5 423.0 L950.0 424.0 L951.5 423.0 L953.0 424.0 L954.5 423.0 L956.0 424.0 L957.5 423.0 L959.0 424.0 L960.5 423.0 L962.0 424.0 L963.5 423.0 L965.0 424.0 L966.5 423.0 L968.0 424.0 L969.5 423.0 L971.0 424.0" fill="none" stroke="#e03030" stroke-width=".8"/></svg>
<svg style="position:absolute;left:0px;top:0px;" width="1" height="1" viewBox="0 0 1 1"><path d="M583 517 L584.5 516.0 L586.0 517.0 L587.5 516.0 L589.0 517.0 L590.5 516.0 L592.0 517.0 L593.5 516.0 L595.0 517.0 L596.5 516.0 L598.0 517.0 L599.5 516.0 L601.0 517.0 L602.5 516.0 L604.0 517.0 L605.5 516.0 L607.0 517.0 L608.5 516.0 L610.0 517.0 L611.5 516.0 L613.0 517.0 L614.5 516.0 L616.0 517.0 L617.5 516.0 L619.0 517.0 L620.5 516.0 L622.0 517.0 L623.5 516.0 L625.0 517.0 L626.5 516.0 L628.0 517.0 L629.5 516.0 L631.0 517.0 L632.5 516.0 L634.0 517.0 L635.5 516.0 L637.0 517.0 L638.5 516.0 L640.0 517.0 L641.5 516.0 L643.0 517.0 L644.5 516.0 L646.0 517.0 L647.5 516.0 L649.0 517.0 L650.5 516.0 L652.0 517.0 L653.5 516.0 L655.0 517.0 L656.5 516.0 L658.0 517.0 L659.5 516.0 L661.0 517.0 L662.5 516.0 L664.0 517.0 L665.5 516.0 L667.0 517.0 L668.5 516.0 L670.0 517.0 L671.5 516.0 L673.0 517.0 L674.5 516.0 L676.0 517.0 L677.5 516.0 L679.0 517.0 L680.5 516.0 L682.0 517.0 L683.5 516.0 L685.0 517.0 L686.5 516.0 L688.0 517.0 L689.5 516.0 L691.0 517.0 L692.5 516.0 L694.0 517.0 L695.5 516.0 L697.0 517.0 L698.5 516.0 L700.0 517.0 L701.5 516.0 L703.0 517.0 L704.5 516.0" fill="none" stroke="#e03030" stroke-width=".8"/></svg>
<div style="position:absolute;left:1207px;top:0px;width:369px;height:811px;background:#131619;"></div>
<div style="position:absolute;left:1212px;top:401px;width:5px;height:50px;background:#5b5d60;border-radius:1px"></div>
<div style="position:absolute;left:1304px;top:56px;width:222px;height:126px;border:3px solid #14ef8e;border-radius:11px 11px 0 0"></div>
<div style="position:absolute;left:1414.5px;top:104.2px;width:0;display:flex;justify-content:center;font-size:23.3px;line-height:28px;font-weight:bold;color:#fff;white-space:pre">Дмитро  Баран...</div>
<div style="position:absolute;left:1309px;top:154.0px;width:170.0px;height:24px;border-radius:7px;background:#2b2c2e"></div>
<div style="position:absolute;left:1313.0px;top:153.9px;font-size:15.4px;line-height:24px;color:#fff;white-space:pre">Дмитро Барановський</div>
<div style="position:absolute;left:1414.5px;top:229.6px;width:0;display:flex;justify-content:center;font-size:23.3px;line-height:28px;font-weight:bold;color:#fff;white-space:pre">Maryna Gruzd</div>
<div style="position:absolute;left:1309px;top:278.0px;width:131.0px;height:24px;border-radius:7px;background:#2b2c2e"></div>
<svg style="position:absolute;left:1312px;top:282px;" width="18" height="18" viewBox="0 0 18 18"><path d="M6 4Q6 1 9 1Q12 1 12 4V10Q12 12 11 13L10.2 14.5H7.8L7 13Q6 12 6 10Z" fill="#f05858"/><rect x="6" y="15" width="6" height="2" fill="#f05858"/><path d="M1.5 17L16.5 1" stroke="#2b2c2e" stroke-width="3.2"/><path d="M1.3 16.8L16.6 1.3" stroke="#f05858" stroke-width="1.5" stroke-linecap="round"/></svg>
<div style="position:absolute;left:1336.5px;top:277.9px;font-size:15.4px;line-height:24px;color:#fff;white-space:pre">Maryna Gruzd</div>
<div style="position:absolute;left:1414.5px;top:352.6px;width:0;display:flex;justify-content:center;font-size:23.3px;line-height:28px;font-weight:bold;color:#fff;white-space:pre">Oksana  Yermole...</div>
<div style="position:absolute;left:1309px;top:402.0px;width:171.0px;height:24px;border-radius:7px;background:#2b2c2e"></div>
<svg style="position:absolute;left:1312px;top:406px;" width="18" height="18" viewBox="0 0 18 18"><path d="M6 4Q6 1 9 1Q12 1 12 4V10Q12 12 11 13L10.2 14.5H7.8L7 13Q6 12 6 10Z" fill="#f05858"/><rect x="6" y="15" width="6" height="2" fill="#f05858"/><path d="M1.5 17L16.5 1" stroke="#2b2c2e" stroke-width="3.2"/><path d="M1.3 16.8L16.6 1.3" stroke="#f05858" stroke-width="1.5" stroke-linecap="round"/></svg>
<div style="position:absolute;left:1336.5px;top:401.9px;font-size:15.4px;line-height:24px;color:#fff;white-space:pre">Oksana Yermolenko</div>
<div style="position:absolute;left:1414.5px;top:477.3px;width:0;display:flex;justify-content:center;font-size:23.3px;line-height:28px;font-weight:bold;color:#fff;white-space:pre">Луганська Анна</div>
<div style="position:absolute;left:1309px;top:526.0px;width:145.0px;height:24px;border-radius:7px;background:#2b2c2e"></div>
<svg style="position:absolute;left:1312px;top:530px;" width="18" height="18" viewBox="0 0 18 18"><path d="M6 4Q6 1 9 1Q12 1 12 4V10Q12 12 11 13L10.2 14.5H7.8L7 13Q6 12 6 10Z" fill="#f05858"/><rect x="6" y="15" width="6" height="2" fill="#f05858"/><path d="M1.5 17L16.5 1" stroke="#2b2c2e" stroke-width="3.2"/><path d="M1.3 16.8L16.6 1.3" stroke="#f05858" stroke-width="1.5" stroke-linecap="round"/></svg>
<div style="position:absolute;left:1336.5px;top:525.9px;font-size:15.4px;line-height:24px;color:#fff;white-space:pre">Луганська Анна</div>
<svg style="position:absolute;left:1366px;top:565px" width="98" height="98" viewBox="0 0 98 98">
<defs><clipPath id="c1"><rect x="0" y="0" width="98" height="98" rx="9"/></clipPath><filter id="b1" x="-10%" y="-10%" width="120%" height="120%"><feGaussianBlur stdDeviation="1"/></filter></defs>
<g clip-path="url(#c1)"><g filter="url(#b1)">
<rect x="-5" y="-5" width="110" height="110" fill="#1b3630"/>
<rect x="58" y="-5" width="47" height="110" fill="#21463b"/>
<rect x="-5" y="-5" width="12" height="80" fill="#13221e"/>
<rect x="1" y="3" width="4" height="60" fill="#4e4a40"/>
<rect x="70" y="-2" width="19" height="16" fill="#8a6a42"/><rect x="73" y="1" width="12" height="10" fill="#4a3a26"/>
<rect x="71" y="24" width="30" height="56" fill="#358672"/>
<rect x="78" y="40" width="20" height="37" fill="#c4d8c0"/>
<rect x="83" y="46" width="10" height="16" fill="#88b48c"/>
<path d="M4 34Q6 2 38 2Q66 4 72 34L80 98H-2Z" fill="#5a3d2e"/>
<path d="M6 30Q3 62 12 98H2Q-4 60 2 28Z" fill="#9c7658"/>
<path d="M12 30Q10 60 18 96L12 98Q6 60 8 30Z" fill="#b08a68"/>
<path d="M64 30Q72 60 80 98H68Z" fill="#7e583e"/>
<path d="M38 8Q64 8 64 40Q64 62 50 74Q40 80 30 74Q14 62 15 38Q16 10 38 8Z" fill="#e2a78f"/>
<ellipse cx="38" cy="30" rx="16" ry="15" fill="#ebb9a2"/>
<ellipse cx="30" cy="52" rx="9" ry="8" fill="#ebb6a0"/>
<path d="M21 40Q27 35 33 39Q27 42 21 40Z" fill="#3a2826"/>
<path d="M46 36Q52 31 58 34Q52 38 46 36Z" fill="#3a2826"/>
<path d="M19 35Q26 30 34 34" stroke="#6a4a3a" stroke-width="1.3" fill="none"/>
<path d="M45 30Q52 26 59 29" stroke="#6a4a3a" stroke-width="1.3" fill="none"/>
<path d="M42 41Q46 47 44 50" stroke="#c08670" stroke-width="1.8" fill="none"/>
<path d="M43 55Q51 51 58 53Q52 59 45 58Z" fill="#c6574a"/>
<rect x="32" y="72" width="22" height="22" fill="#d09680"/>
<path d="M-2 60Q10 58 16 68L18 82L8 90H-2Z" fill="#e4dcdd"/>
<path d="M60 76L98 66V98H54Z" fill="#1a1618"/>
</g></g></svg>
<div style="position:absolute;left:1309px;top:649.0px;width:139.0px;height:24px;border-radius:7px;background:rgba(42,44,47,.92)"></div>
<svg style="position:absolute;left:1312px;top:653px;" width="18" height="18" viewBox="0 0 18 18"><path d="M6 4Q6 1 9 1Q12 1 12 4V10Q12 12 11 13L10.2 14.5H7.8L7 13Q6 12 6 10Z" fill="#f05858"/><rect x="6" y="15" width="6" height="2" fill="#f05858"/><path d="M1.5 17L16.5 1" stroke="#2b2c2e" stroke-width="3.2"/><path d="M1.3 16.8L16.6 1.3" stroke="#f05858" stroke-width="1.5" stroke-linecap="round"/></svg>
<div style="position:absolute;left:1336.5px;top:648.9px;font-size:15.4px;line-height:24px;color:#fff;white-space:pre">Anna Zinovieva</div>
<svg style="position:absolute;left:1366px;top:688px" width="98" height="96" viewBox="0 0 98 96">
<defs><clipPath id="c2"><rect x="0" y="0" width="98" height="110" rx="9"/></clipPath><filter id="b2" x="-10%" y="-10%" width="120%" height="120%"><feGaussianBlur stdDeviation="1.2"/></filter></defs>
<g clip-path="url(#c2)"><g filter="url(#b2)">
<rect x="-5" y="-5" width="110" height="110" fill="#e4e9ec"/>
<ellipse cx="12" cy="10" rx="22" ry="9" fill="#b8cde0"/>
<ellipse cx="50" cy="20" rx="14" ry="6" fill="#c6d6e4"/>
<rect x="-5" y="34" width="110" height="32" fill="#c4b29c"/>
<rect x="50" y="36" width="42" height="30" fill="#8e8a90"/>
<path d="M38 66V44Q38 9 67 9Q97 9 97 44V66H89V44Q89 18 67 18Q46 18 46 44V66Z" fill="#c8ad80"/>
<path d="M46 44Q46 18 67 18Q89 18 89 44" fill="none" stroke="#9a9088" stroke-width="2"/>
<rect x="52" y="46" width="9" height="16" fill="#5a5058"/><rect x="65" y="46" width="9" height="16" fill="#5e5258"/><rect x="78" y="46" width="9" height="16" fill="#5a5058"/>
<rect x="63" y="0" width="12" height="10" fill="#6a6a5e"/>
<ellipse cx="45" cy="17" rx="3" ry="3.5" fill="#3e3e3e"/>
<rect x="92" y="16" width="7" height="24" fill="#3e3e3e"/>
<rect x="-5" y="63" width="110" height="40" fill="#b4ab90"/>
<rect x="55" y="72" width="45" height="30" fill="#a09a70"/>
<rect x="-5" y="34" width="20" height="22" fill="#cbb39a"/>
<ellipse cx="32" cy="36" rx="17" ry="16" fill="#b2b84e"/>
<ellipse cx="26" cy="30" rx="8" ry="7" fill="#cfcf78"/>
<ellipse cx="12" cy="78" rx="18" ry="26" fill="#66742c"/>
<ellipse cx="9" cy="68" rx="7" ry="9" fill="#a0a448"/>
<ellipse cx="47" cy="84" rx="13" ry="13" fill="#d9a24e"/>
<ellipse cx="49" cy="64" rx="6" ry="7" fill="#b86a44"/>
<ellipse cx="38" cy="82" rx="5" ry="7" fill="#e6dccb"/>
</g></g></svg>
<div style="position:absolute;left:1309px;top:772.5px;width:174.0px;height:24px;border-radius:7px;background:rgba(42,44,47,.92)"></div>
<svg style="position:absolute;left:1312px;top:776.5px;" width="18" height="18" viewBox="0 0 18 18"><path d="M6 4Q6 1 9 1Q12 1 12 4V10Q12 12 11 13L10.2 14.5H7.8L7 13Q6 12 6 10Z" fill="#f05858"/><rect x="6" y="15" width="6" height="2" fill="#f05858"/><path d="M1.5 17L16.5 1" stroke="#2b2c2e" stroke-width="3.2"/><path d="M1.3 16.8L16.6 1.3" stroke="#f05858" stroke-width="1.5" stroke-linecap="round"/></svg>
<div style="position:absolute;left:1336.5px;top:772.4px;font-size:15.4px;line-height:24px;color:#fff;white-space:pre">Анастасія Левченко</div>
<div style="position:absolute;left:1368px;top:800px;width:93px;height:11px;background:#0c0e10;border-radius:7px 7px 0 0"></div>
</body></html>
